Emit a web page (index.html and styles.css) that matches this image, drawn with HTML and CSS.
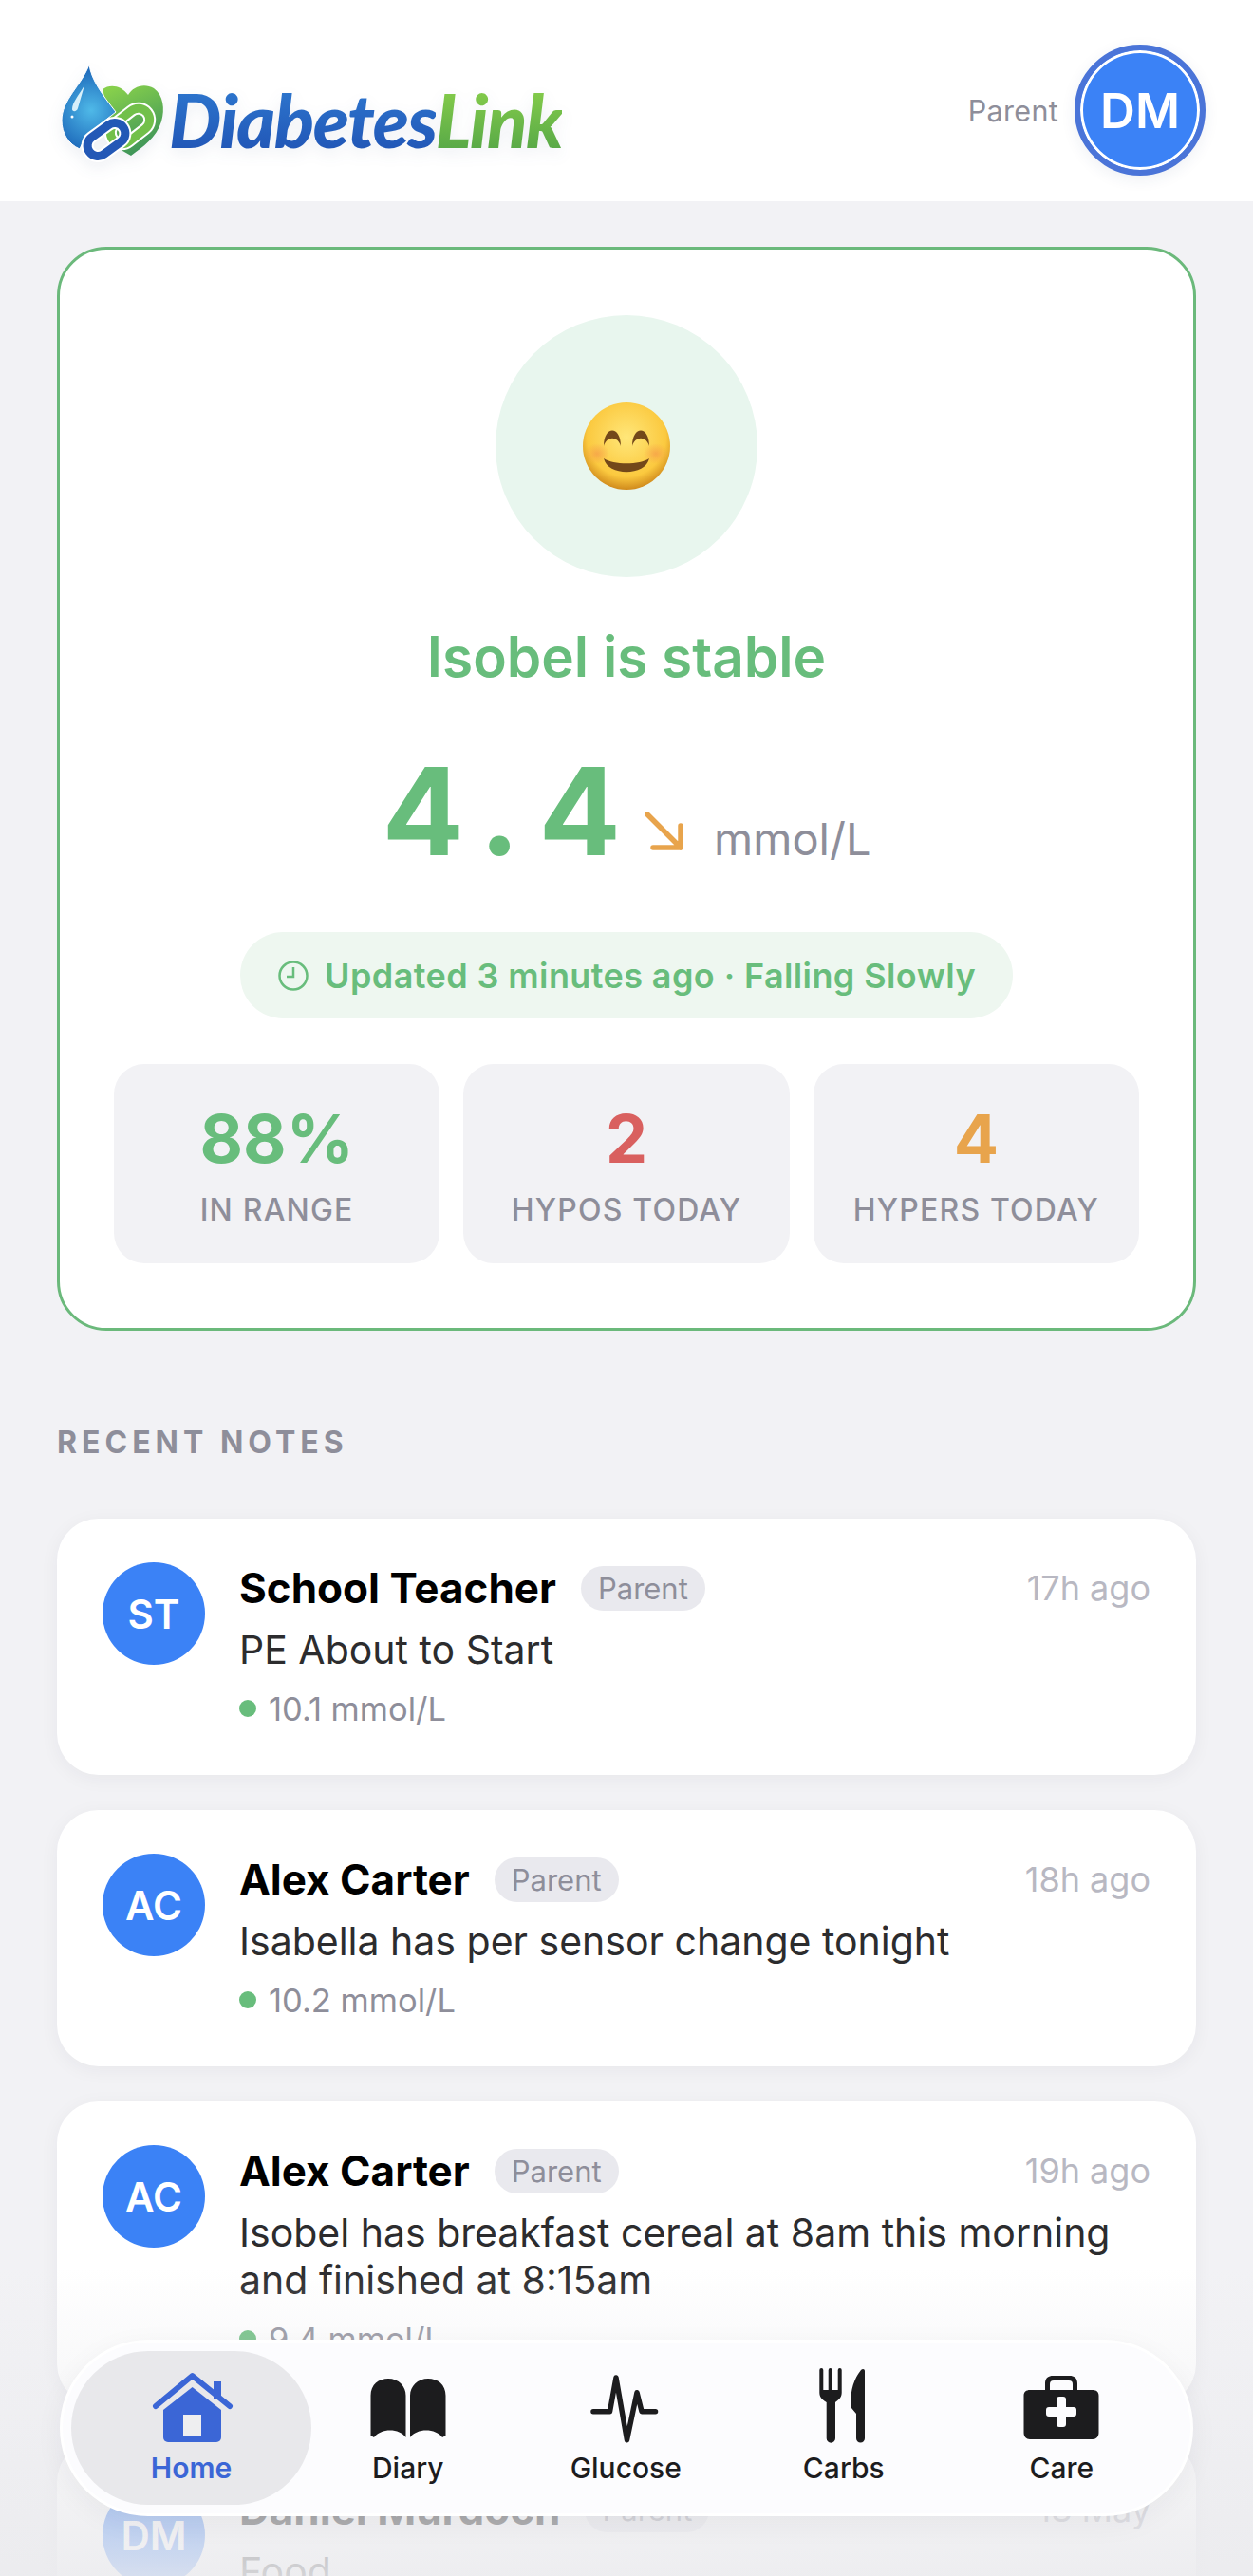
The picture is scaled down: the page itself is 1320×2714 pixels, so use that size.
FILE: index.html
```html
<!DOCTYPE html>
<html lang="en">
<head>
    <meta charset="UTF-8">
    <meta name="viewport" content="width=device-width, initial-scale=1.0">
    <title>DiabetesLink</title>
    <link rel="stylesheet" href="styles.css">
</head>
<body>
    <div class="page">
        <header class="topbar">
            <div class="logo">
                <svg class="logo-mark" viewBox="60 60 120 115" width="120" height="115">
                    <defs>
                        <radialGradient id="dropFill" gradientUnits="userSpaceOnUse" cx="96" cy="116" r="42">
                            <stop offset="0" stop-color="#4fb9e8"/>
                            <stop offset="1" stop-color="#1f6cbc"/>
                        </radialGradient>
                        <linearGradient id="heartFill" x1="0.3" y1="0" x2="0.7" y2="1">
                            <stop offset="0" stop-color="#86cf4c"/>
                            <stop offset="1" stop-color="#38905a"/>
                        </linearGradient>
                    </defs>
                    <path d="M108 94C116 88 128 90 135 100C140 91 152 87 162 93C172 100 174 115 170 128C165 145 150 155 138 164L124 156Z" fill="url(#heartFill)"/>
                    <path d="M94 68C96 84 108 100 122 118C110 128 90 140 84 157C72 152 65 140 65 127C65 105 86 90 94 68Z" fill="url(#dropFill)" stroke="#fff" stroke-width="1"/>
                    <path d="M89 90C83 100 76 108 76 115C76 118 81 118 82 114Z" fill="#d8f0fa"/>
                    <circle cx="76" cy="123" r="1.5" fill="#fff"/>
                    <rect x="114" y="121" width="46" height="24" rx="12" transform="rotate(-38 137 133)" fill="none" stroke="#fff" stroke-width="13"/>
                    <rect x="114" y="121" width="46" height="24" rx="12" transform="rotate(-38 137 133)" fill="none" stroke="#72c04a" stroke-width="9"/>
                    <rect x="90" y="136" width="44" height="22" rx="11" transform="rotate(-36 112 147)" fill="none" stroke="#fff" stroke-width="13"/>
                    <rect x="90" y="136" width="44" height="22" rx="11" transform="rotate(-36 112 147)" fill="none" stroke="#2358b6" stroke-width="9"/>
                </svg>
                <span class="logo-text"><span class="logo-blue">Diabetes</span><span class="logo-green">Link</span></span>
            </div>
            <div class="account">
                <span class="account-role">Parent</span>
                <div class="account-avatar">DM</div>
            </div>
        </header>

        <main class="content">
            <section class="status-card">
                <div class="mood">
                    <svg viewBox="0 0 92 92" width="92" height="92">
                        <defs>
                            <radialGradient id="faceFill" cx="0.5" cy="0.4" r="0.6">
                                <stop offset="0" stop-color="#ffe77a"/>
                                <stop offset="0.75" stop-color="#fbc93f"/>
                                <stop offset="1" stop-color="#d08a1c"/>
                            </radialGradient>
                            <radialGradient id="cheekFill">
                                <stop offset="0" stop-color="#f59a4a" stop-opacity="0.7"/>
                                <stop offset="1" stop-color="#f59a4a" stop-opacity="0"/>
                            </radialGradient>
                        </defs>
                        <circle cx="46" cy="46" r="46" fill="url(#faceFill)"/>
                        <ellipse cx="15" cy="54" rx="13" ry="11" fill="url(#cheekFill)"/>
                        <ellipse cx="77" cy="54" rx="13" ry="11" fill="url(#cheekFill)"/>
                        <path d="M22 46C22 24 40 24 40 46C37 35 25 35 22 46Z" fill="#73481a"/>
                        <path d="M52 46C52 24 70 24 70 46C67 35 55 35 52 46Z" fill="#73481a"/>
                        <path d="M22 59C32 66 60 66 70 59C66 78 26 78 22 59Z" fill="#73481a"/>
                    </svg>
                </div>
                <h1 class="status-title">Isobel is stable</h1>
                <div class="reading">
                    <span class="reading-value">4.4</span>
                    <svg class="reading-arrow" viewBox="0 0 42 42" width="42" height="42">
                        <path d="M3 3L38 38M38 15V38H9" fill="none" stroke="#e8a44c" stroke-width="5.500" stroke-linecap="round" stroke-linejoin="round"/>
                    </svg>
                    <span class="reading-unit">mmol/L</span>
                </div>
                <div class="updated">
                    <svg viewBox="0 0 34 34" width="34" height="34">
                        <circle cx="17" cy="17" r="14.500" fill="none" stroke="#68bd7c" stroke-width="2.500"/>
                        <path d="M17 8V18H10" fill="none" stroke="#68bd7c" stroke-width="2.500"/>
                    </svg>
                    <span>Updated 3 minutes ago · Falling Slowly</span>
                </div>
                <div class="stats">
                    <div class="stat">
                        <div class="stat-value green">88%</div>
                        <div class="stat-label">IN RANGE</div>
                    </div>
                    <div class="stat">
                        <div class="stat-value red">2</div>
                        <div class="stat-label">HYPOS TODAY</div>
                    </div>
                    <div class="stat">
                        <div class="stat-value amber">4</div>
                        <div class="stat-label">HYPERS TODAY</div>
                    </div>
                </div>
            </section>

            <h2 class="section-title">RECENT NOTES</h2>

            <article class="note">
                <div class="note-avatar">ST</div>
                <div class="note-body">
                    <div class="note-head">
                        <span class="note-name">School Teacher</span>
                        <span class="note-role">Parent</span>
                        <span class="note-time">17h ago</span>
                    </div>
                    <p class="note-text">PE About to Start</p>
                    <div class="note-meta"><i class="dot"></i>10.1 mmol/L</div>
                </div>
            </article>

            <article class="note">
                <div class="note-avatar">AC</div>
                <div class="note-body">
                    <div class="note-head">
                        <span class="note-name">Alex Carter</span>
                        <span class="note-role">Parent</span>
                        <span class="note-time">18h ago</span>
                    </div>
                    <p class="note-text">Isabella has per sensor change tonight</p>
                    <div class="note-meta"><i class="dot"></i>10.2 mmol/L</div>
                </div>
            </article>

            <article class="note">
                <div class="note-avatar">AC</div>
                <div class="note-body">
                    <div class="note-head">
                        <span class="note-name">Alex Carter</span>
                        <span class="note-role">Parent</span>
                        <span class="note-time">19h ago</span>
                    </div>
                    <p class="note-text">Isobel has breakfast cereal at 8am this morning<br>and finished at 8:15am</p>
                    <div class="note-meta"><i class="dot"></i>9.4 mmol/L</div>
                </div>
            </article>

            <article class="note">
                <div class="note-avatar">DM</div>
                <div class="note-body">
                    <div class="note-head">
                        <span class="note-name">Daniel Murdoch</span>
                        <span class="note-role">Parent</span>
                        <span class="note-time">18 May</span>
                    </div>
                    <p class="note-text">Food</p>
                </div>
            </article>
        </main>

        <div class="fade"></div>

        <nav class="tabbar">
            <a class="tab active">
                <svg viewBox="0 0 84 80" width="84" height="80">
                    <path d="M4 38L42.600 6L82 38" fill="none" stroke="#3b66d6" stroke-width="6" stroke-linecap="round" stroke-linejoin="round"/>
                    <rect x="65" y="12" width="8" height="18" fill="#3b66d6"/>
                    <path d="M12 42L42.600 18L73 42V71a5 5 0 0 1-5 5H17a5 5 0 0 1-5-5Z" fill="#3b66d6"/>
                    <rect x="33" y="47" width="19" height="23" fill="#eeeef0"/>
                </svg>
                <span>Home</span>
            </a>
            <a class="tab">
                <svg viewBox="0 0 84 80" width="84" height="80">
                    <path d="M2.500 27C2.500 15 11 9 21 9C32 9 39.500 17 39.500 27V71C33 61 13 61 6 71L2.500 69Z" fill="#1c1c1e"/>
                    <path d="M81.500 27C81.500 15 73 9 63 9C52 9 44 17 44 27V71C51 61 71 61 78 71L81.500 69Z" fill="#1c1c1e"/>
                </svg>
                <span>Diary</span>
            </a>
            <a class="tab">
                <svg viewBox="0 0 84 80" width="84" height="80">
                    <path d="M8 43.700H25.500L32 8L43.500 73.700L54 23.700L59 43.700H73.500" fill="none" stroke="#1c1c1e" stroke-width="5.500" stroke-linecap="round" stroke-linejoin="round"/>
                </svg>
                <span>Glucose</span>
            </a>
            <a class="tab">
                <svg viewBox="0 0 84 80" width="84" height="80">
                    <path d="M16.300 0a2 2 0 0 1 4 0V21H25.700V0a2 2 0 0 1 4 0V21H35.700V0a2 2 0 0 1 4 0V24C39.700 30 35 32 33 34V72a4.650 4.650 0 0 1-9.300 0V34C21 32 16.300 30 16.300 24Z" fill="#1c1c1e"/>
                    <path d="M64 1V72a4.500 4.500 0 0 1-9 0V46L50 40C48 30 50 12 60 0C62-2 64-1 64 1Z" fill="#1c1c1e"/>
                </svg>
                <span>Carbs</span>
            </a>
            <a class="tab">
                <svg viewBox="0 0 84 80" width="84" height="80">
                    <path d="M9 21H25V14C25 8 29 6 33 6H51C55 6 59 8 59 14V21H75C79 21 81.500 23 81.500 27V66C81.500 70 79 73 75 73H9C5 73 2.500 70 2.500 66V27C2.500 23 5 21 9 21ZM30 21H54V15C54 12.500 53 11 50 11H34C31 11 30 12.500 30 15Z" fill="#1c1c1e" fill-rule="evenodd"/>
                    <path d="M37 31C37 29 38 28 40 28H44C46 28 47 29 47 31V39H55C57 39 58 40 58 42V46C58 48 57 49 55 49H47V57C47 59 46 60 44 60H40C38 60 37 59 37 57V49H29C27 49 26 48 26 46V42C26 40 27 39 29 39H37Z" fill="#fcfcfe"/>
                </svg>
                <span>Care</span>
            </a>
        </nav>
    </div>
</body>
</html>
```

FILE: styles.css
```css
* {
    box-sizing: border-box;
}

body {
    margin: 0;
    background: #f2f2f5;
    color: #1c1c1e;
    font-family: Inter, "Liberation Sans", sans-serif;
}

.page {
    position: relative;
    height: 2714px;
    overflow: hidden;
}

/* Top bar */
.topbar {
    height: 212px;
    background: #fff;
    padding: 47px 50px 0 65px;
    display: flex;
    justify-content: space-between;
    align-items: flex-start;
}

.logo {
    display: flex;
    align-items: flex-start;
    margin-top: 13px;
    margin-left: -5px;
    filter: drop-shadow(0 6px 8px rgba(40, 60, 110, 0.08));
}

.logo-text {
    font-family: Lato, sans-serif;
    font-style: italic;
    font-weight: 900;
    font-size: 78px;
    line-height: 90px;
    letter-spacing: -1.5px;
    margin-top: 21px;
    margin-left: -2px;
}

.logo-blue {
    background: linear-gradient(#2f7cd2, #1f50b2);
    -webkit-background-clip: text;
    background-clip: text;
    color: transparent;
}

.logo-green {
    background: linear-gradient(#8fd44c, #4ea146);
    -webkit-background-clip: text;
    background-clip: text;
    color: transparent;
}

.account {
    display: flex;
    align-items: center;
    gap: 17px;
}

.account-role {
    font-size: 30.500px;
    color: #8e8e9a;
    letter-spacing: 0.3px;
}

.account-avatar {
    width: 138px;
    height: 138px;
    border-radius: 50%;
    background: #3b82f6;
    border: 6px solid #4a74d8;
    box-shadow: inset 0 0 0 3px #fff, 0 4px 16px rgba(40, 60, 110, 0.08);
    color: #fff;
    font-size: 51px;
    font-weight: 600;
    display: flex;
    align-items: center;
    justify-content: center;
}

/* Main column */
.content {
    padding: 48px 60px 0;
}

.status-card {
    background: #fff;
    border: 3px solid #6bb97b;
    border-radius: 52px;
    height: 1142px;
    padding: 69px 57px 0;
    display: flex;
    flex-direction: column;
    align-items: center;
}

.mood {
    width: 276px;
    height: 276px;
    border-radius: 50%;
    background: #e8f6ee;
    display: flex;
    align-items: center;
    justify-content: center;
}

.status-title {
    margin: 50px 0 0;
    font-size: 58.500px;
    line-height: 68px;
    font-weight: 600;
    color: #68bd7c;
}

.reading {
    display: flex;
    align-items: baseline;
    margin-top: 54px;
}

.reading-value {
    font-size: 128px;
    line-height: 150px;
    font-weight: 700;
    color: #68bd7c;
    letter-spacing: 20px;
}

.reading-arrow {
    align-self: center;
    margin: 42px 31px 0 5px;
}

.reading-unit {
    font-size: 47px;
    color: #8e8e9a;
}

.updated {
    margin-top: 52px;
    height: 91px;
    border-radius: 46px;
    background: #eef7f0;
    padding: 0 39px;
    display: flex;
    align-items: center;
    gap: 16px;
    color: #68bd7c;
    font-size: 36px;
    font-weight: 600;
    letter-spacing: 0.4px;
}

.stats {
    margin-top: 48px;
    width: 100%;
    display: grid;
    grid-template-columns: repeat(3, 1fr);
    gap: 25px;
}

.stat {
    height: 210px;
    border-radius: 32px;
    background: #f2f2f5;
    display: flex;
    flex-direction: column;
    align-items: center;
    padding-top: 41px;
}

.stat-value {
    font-size: 70px;
    line-height: 76px;
    font-weight: 700;
}

.stat-label {
    margin-top: 15px;
    font-size: 32px;
    line-height: 44px;
    font-weight: 500;
    color: #8e8e9a;
    letter-spacing: 1.2px;
}

.green { color: #68bd7c; }
.red { color: #d9605f; }
.amber { color: #e8a44c; }

.section-title {
    margin: 96px 0 0;
    font-size: 32px;
    line-height: 44px;
    font-weight: 700;
    color: #8e8e9a;
    letter-spacing: 5px;
}

/* Notes */
.note {
    margin-top: 37px;
    background: #fff;
    border-radius: 44px;
    box-shadow: 0 4px 20px rgba(30, 30, 60, 0.05);
    padding: 48px 48px 50px;
    display: flex;
    gap: 36px;
}

.section-title + .note {
    margin-top: 58px;
}

.note-avatar {
    flex: none;
    width: 108px;
    height: 108px;
    margin-top: -2px;
    border-radius: 50%;
    background: #3b82f6;
    color: #fff;
    font-size: 42px;
    font-weight: 600;
    display: flex;
    align-items: center;
    justify-content: center;
}

.note-body {
    flex: 1;
}

.note-head {
    display: flex;
    align-items: center;
    height: 50px;
}

.note-name {
    font-size: 44px;
    font-weight: 700;
    color: #000;
}

.note-role {
    margin-left: 26px;
    height: 47px;
    border-radius: 24px;
    background: #e9e9ee;
    color: #8e8e9a;
    font-size: 31px;
    padding: 0 18px;
    display: flex;
    align-items: center;
}

.note-time {
    margin-left: auto;
    font-size: 36px;
    color: #b8b8c2;
}

.note-text {
    margin: 15px 0 0;
    font-size: 41px;
    line-height: 50px;
    color: #2c2c2e;
}

.note-meta {
    margin-top: 17px;
    height: 40px;
    display: flex;
    align-items: center;
    font-size: 34.500px;
    color: #8e8e9a;
}

.dot {
    width: 18px;
    height: 18px;
    border-radius: 50%;
    background: #68bd7c;
    margin-right: 13px;
}

/* Fade behind the tab bar */
.fade {
    position: absolute;
    left: 0;
    right: 0;
    bottom: 0;
    height: 324px;
    background: linear-gradient(rgba(235, 235, 238, 0), rgba(235, 235, 238, 0.2) 20%, rgba(235, 235, 238, 0.88));
}

/* Tab bar */
.tabbar {
    position: absolute;
    left: 63px;
    top: 2465px;
    width: 1194px;
    height: 186px;
    border-radius: 93px;
    background: #fcfcfe;
    border: 3px solid #fff;
    box-shadow: 0 8px 30px rgba(30, 30, 60, 0.05);
    padding: 9px;
    display: flex;
}

.tab {
    width: 229.500px;
    height: 162px;
    border-radius: 81px;
    display: flex;
    flex-direction: column;
    align-items: center;
    padding-top: 20px;
    font-size: 30px;
    line-height: 36px;
    font-weight: 500;
    color: #1c1c1e;
}

.tab svg {
    overflow: visible;
}

.tab span {
    margin-top: 5px;
}

.tab.active {
    width: 253px;
    margin-right: -13px;
    background: #e8e8eb;
    color: #3b66d6;
    font-weight: 600;
}
```
